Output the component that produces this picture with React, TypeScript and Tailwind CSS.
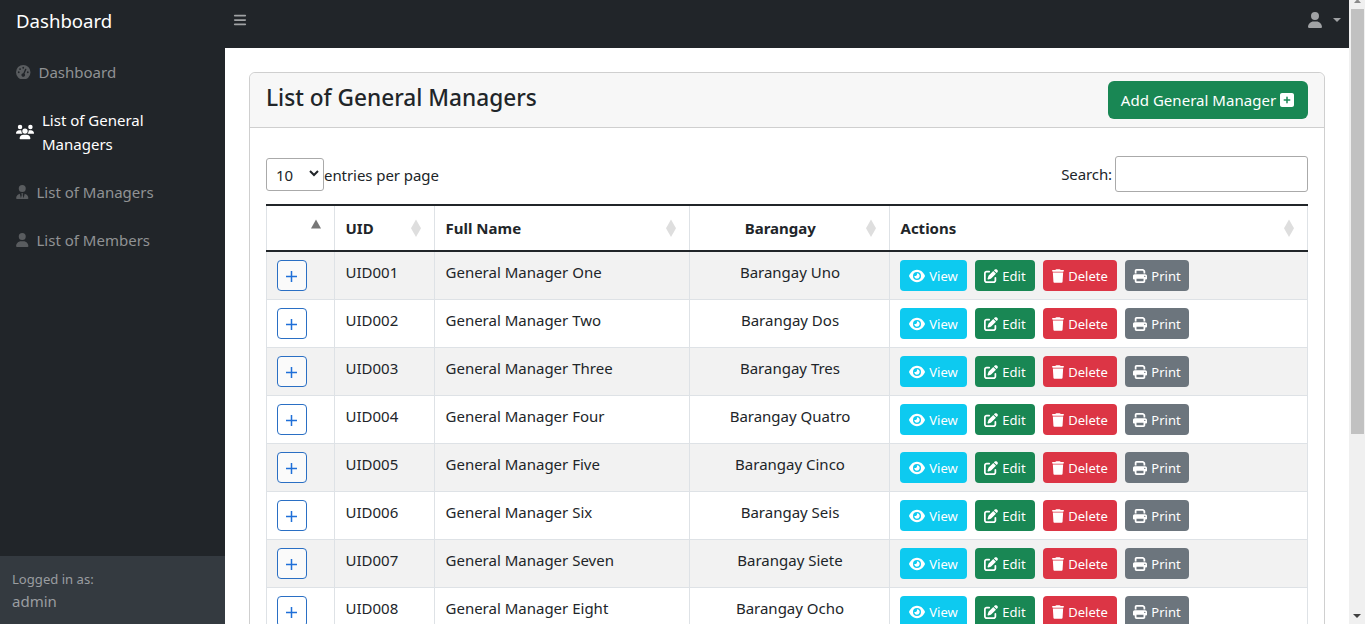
import type { ReactNode } from "react";
import {
  FaBars,
  FaEye,
  FaGaugeHigh,
  FaPenToSquare,
  FaPrint,
  FaSquarePlus,
  FaTrash,
  FaUser,
  FaUserTie,
  FaUsers,
} from "react-icons/fa6";

const managers = [
  ["UID001", "General Manager One", "Barangay Uno"],
  ["UID002", "General Manager Two", "Barangay Dos"],
  ["UID003", "General Manager Three", "Barangay Tres"],
  ["UID004", "General Manager Four", "Barangay Quatro"],
  ["UID005", "General Manager Five", "Barangay Cinco"],
  ["UID006", "General Manager Six", "Barangay Seis"],
  ["UID007", "General Manager Seven", "Barangay Siete"],
  ["UID008", "General Manager Eight", "Barangay Ocho"],
];

function NavItem({ icon, label, active }: { icon: ReactNode; label: string; active?: boolean }) {
  return (
    <a className={`flex items-center gap-2 px-4 py-3 ${active ? "text-white" : "text-[#909294]"}`}>
      <span className={`shrink-0 ${active ? "text-white" : "text-[#595c5f]"}`}>{icon}</span>
      <span>{label}</span>
    </a>
  );
}

function SortIcon({ sorted }: { sorted?: boolean }) {
  return (
    <svg width="10" height="18" viewBox="0 0 10 18" className="shrink-0">
      <path d={sorted ? "M5 0.5 L10 9.5 H0 Z" : "M5 0.5 L10 9.25 L5 18 L0 9.25 Z"} fill={sorted ? "#777" : "#dedede"} />
    </svg>
  );
}

function HeadCell({ label, center, sorted }: { label: string; center?: boolean; sorted?: boolean }) {
  return (
    <th className="border-y-2 border-[#212529] p-0 font-bold first:*:border-l">
      <div className="flex h-11 items-center border-r border-[#dee2e6] pr-[13px] pl-[10.5px]">
        <span className={`flex-1 ${center ? "pr-[6px] text-center" : "text-left"}`}>{label}</span>
        <SortIcon sorted={sorted} />
      </div>
    </th>
  );
}

function ActionButton({ icon, label, className }: { icon: ReactNode; label: string; className: string }) {
  return (
    <button
      className={`flex h-[31px] items-center justify-center gap-1 rounded text-[13px] text-white ${className}`}
    >
      {icon}
      <span>{label}</span>
    </button>
  );
}

export default function App() {
  return (
    <div className="flex h-[624px] w-[1365px] overflow-hidden bg-white font-['Noto_Sans','Open_Sans',sans-serif] text-[15px] leading-6 text-[#212529]">
      <aside className="flex w-[225px] shrink-0 flex-col bg-[#212529]">
        <div className="h-12 px-4 pt-[6px] text-[18.6px] leading-[30px] text-white">Dashboard</div>
        <nav className="flex flex-1 flex-col">
          <NavItem icon={<FaGaugeHigh size={14.5} />} label="Dashboard" />
          <NavItem icon={<FaUsers size={18} />} label="List of General Managers" active />
          <NavItem icon={<FaUserTie size={14} className="w-[12.5px]" />} label="List of Managers" />
          <NavItem icon={<FaUser size={14} className="w-[12.5px]" />} label="List of Members" />
        </nav>
        <div className="h-[68px] bg-[#343a40] px-3 pt-3 text-[#9a9da0]">
          <div className="text-[13.1px] leading-[22px]">Logged in as:</div>
          <div className="leading-[22px]">admin</div>
        </div>
      </aside>

      <div className="flex w-[1124px] shrink-0 flex-col">
        <header className="flex h-12 shrink-0 items-center justify-between bg-[#212529] px-2 pb-2 text-[#a0a2a4]">
          <FaBars size={14} />
          <div className="flex items-center gap-[10px]">
            <FaUser size={16} />
            <svg width="8" height="4" viewBox="0 0 8 4">
              <path d="M0 0 H8 L4 4 Z" fill="currentColor" />
            </svg>
          </div>
        </header>

        <main className="flex-1 overflow-hidden px-6 pt-6">
          <section className="h-[900px] rounded-md border border-[#cfcfcf]">
            <div className="flex h-[55px] justify-between rounded-t-md border-b border-[#cfcfcf] bg-[#f7f7f7] px-4 pt-2">
              <h1 className="text-[22.65px] leading-[33px] font-medium">List of General Managers</h1>
              <button className="flex h-[38px] w-[200px] items-center justify-center gap-[3px] rounded-md bg-[#198754] text-white">
                <span className="tracking-[0.03px]">Add General Manager</span>
                <FaSquarePlus size={16} />
              </button>
            </div>

            <div className="px-4 pt-7">
              <div className="flex h-9 items-center justify-between">
                <label className="flex items-center">
                  <span className="flex h-[33px] w-[58px] items-center justify-between rounded-[3px] border border-[#aaa] pt-px pr-1 pl-[9px]">
                    10
                    <svg width="10" height="7" viewBox="0 0 10 7" fill="none" className="-mt-0.5">
                      <path d="M1 1 L5 5 L9 1" stroke="#212529" strokeWidth="2" />
                    </svg>
                  </span>
                  <span className="pt-px tracking-[-0.06px]">entries per page</span>
                </label>
                <label className="flex items-center gap-[3px]">
                  <span className="tracking-[-0.1px]">Search:</span>
                  <input className="h-9 w-[193px] rounded-[3px] border border-[#aaa] bg-transparent" />
                </label>
              </div>

              <table className="mt-3 w-[1042px] table-fixed border-separate border-spacing-0">
                <colgroup>
                  <col className="w-[69px]" />
                  <col className="w-[100px]" />
                  <col className="w-[255px]" />
                  <col className="w-[200px]" />
                  <col />
                </colgroup>
                <thead>
                  <tr>
                    <HeadCell label="" sorted />
                    <HeadCell label="UID" />
                    <HeadCell label="Full Name" />
                    <HeadCell label="Barangay" center />
                    <HeadCell label="Actions" />
                  </tr>
                </thead>
                <tbody>
                  {managers.map(([uid, name, barangay]) => (
                    <tr key={uid} className="odd:bg-[#f2f2f2] [&>td]:h-12 [&>td]:border-r [&>td]:border-b [&>td]:border-[#dee2e6] [&>td]:px-[10px] [&>td]:pt-2 [&>td]:align-top [&>td:first-child]:border-l">
                      <td>
                        <button className="flex h-[31px] w-[30px] items-center justify-center rounded border border-[#2a6fc4] bg-white/60 pr-px">
                          <svg width="11" height="11" viewBox="0 0 11 11" className="mt-px">
                            <path d="M5.5 0 V11 M0 5.5 H11" stroke="#1f6fd8" strokeWidth="1.5" />
                          </svg>
                        </button>
                      </td>
                      <td>
                        <span className="pl-[0.5px]">{uid}</span>
                      </td>
                      <td>
                        <span className="pl-[0.5px]">{name}</span>
                      </td>
                      <td className="text-center">
                        <span className="pl-px">{barangay}</span>
                      </td>
                      <td>
                        <div className="flex gap-2">
                          <ActionButton icon={<FaEye size={16} />} label="View" className="w-[67px] bg-[#0dcaf0]" />
                          <ActionButton icon={<FaPenToSquare size={14} />} label="Edit" className="w-[60px] bg-[#198754]" />
                          <ActionButton icon={<FaTrash size={14} className="w-3" />} label="Delete" className="w-[74px] bg-[#dc3545]" />
                          <ActionButton icon={<FaPrint size={14} />} label="Print" className="w-[64px] bg-[#6c757d]" />
                        </div>
                      </td>
                    </tr>
                  ))}
                </tbody>
              </table>
            </div>
          </section>
        </main>
      </div>

      <div className="flex w-4 shrink-0 flex-col items-center bg-[#f0f0f0]">
        <svg width="7" height="4" viewBox="0 0 7 4" className="shrink-0">
          <path d="M3.5 -1 L7 3 H0 Z" fill="#8a8a8a" />
        </svg>
        <div className="mt-[5px] ml-px h-[425px] w-[13px] bg-[#c1c1c1]" />
        <svg width="8" height="4" viewBox="0 0 8 4" className="mt-auto mb-[6px]">
          <path d="M0 0 H8 L4 4 Z" fill="#404040" />
        </svg>
      </div>
    </div>
  );
}
